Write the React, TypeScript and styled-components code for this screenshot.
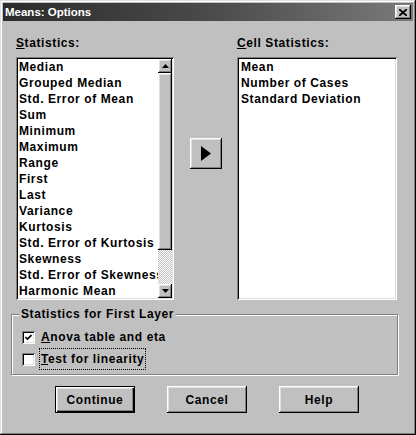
import React from 'react';
import styled, { createGlobalStyle } from 'styled-components';

const Global = createGlobalStyle`
  html, body { margin: 0; padding: 0; background: #c0c0c0; }
  body { font-family: "Liberation Sans", Arial, sans-serif; }
  * { box-sizing: border-box; }
`;

const bevelOut = `inset -1px -1px #000, inset 1px 1px #fff, inset -2px -2px #808080, inset 2px 2px #dfdfdf`;
const bevelIn = `inset 1px 1px #808080, inset -1px -1px #fff, inset 2px 2px #000, inset -2px -2px #dfdfdf`;

const Window = styled.div`
  width: 416px;
  height: 435px;
  background: #c0c0c0;
  padding: 3px;
  box-shadow: inset -1px -1px #000, inset 1px 1px #dfdfdf, inset -2px -2px #808080, inset 2px 2px #fff;
  display: flex;
  flex-direction: column;
  color: #000;
  font-size: 12px;
  font-weight: bold;
  letter-spacing: 0.6px;
`;

const TitleBar = styled.div`
  height: 18px;
  display: flex;
  align-items: center;
  justify-content: space-between;
  background: linear-gradient(90deg, #2c2c2c 0%, #4a4a4a 50%, #7a7a7a 100%);
  padding: 0 2px 0 2px;
  color: #fff;
  font-size: 11.5px;
  letter-spacing: 0;
`;

const TitleText = styled.span`
  line-height: 18px;
`;

const CloseButton = styled.div`
  width: 16px;
  height: 14px;
  background: #c0c0c0;
  box-shadow: ${bevelOut};
  display: flex;
  align-items: center;
  justify-content: center;
`;

const Body = styled.div`
  flex: 1;
  display: flex;
  flex-direction: column;
  padding: 14px 15px 0 8px;
`;

const TopGrid = styled.div`
  display: grid;
  grid-template-columns: 158px 1fr 160px;
  grid-template-rows: 16px 243px;
  row-gap: 6px;
  margin: 0 1px 0 5px;
`;

const Label = styled.div<{ $col: number }>`
  grid-column: ${(p) => p.$col};
  line-height: 16px;
  white-space: nowrap;
`;

const ListBox = styled.div<{ $pad: number }>`
  background: #fff;
  box-shadow: ${bevelIn};
  padding: 2px;
  display: flex;
  overflow: hidden;
  & > ul {
    padding-left: ${(p) => p.$pad}px;
  }
`;

const Items = styled.ul`
  flex: 1;
  margin: 0;
  list-style: none;
  line-height: 16px;
  overflow: hidden;
  white-space: nowrap;
  min-width: 0;
`;

const Item = styled.li`
  height: 16px;
`;

const ScrollBar = styled.div`
  width: 14px;
  display: flex;
  flex-direction: column;
`;

const ScrollArrow = styled.div`
  width: 14px;
  height: 14px;
  background: #c0c0c0;
  box-shadow: ${bevelOut};
  display: flex;
  align-items: center;
  justify-content: center;
`;

const Thumb = styled.div<{ $h: number }>`
  height: ${(p) => p.$h}px;
  background: #c0c0c0;
  box-shadow: ${bevelOut};
`;

const Track = styled.div`
  flex: 1;
  background: repeating-conic-gradient(#c0c0c0 0 25%, #fff 0 50%) 0 0 / 2px 2px;
`;

const MiddleColumn = styled.div`
  display: flex;
  justify-content: center;
  align-items: flex-start;
  padding-top: 81px;
`;

const MoveButton = styled.div`
  width: 32px;
  height: 31px;
  background: #c0c0c0;
  box-shadow: ${bevelOut};
  display: flex;
  align-items: center;
  justify-content: center;
`;

const GroupBox = styled.div`
  position: relative;
  margin-top: 14px;
  height: 61px;
  border: 1px solid #808080;
  box-shadow: inset 1px 1px #fff, 1px 1px #fff;
  padding: 12px 0 0 10px;
  display: flex;
  flex-direction: column;
  gap: 2px;
`;

const Legend = styled.span`
  position: absolute;
  top: -9px;
  left: 7px;
  padding: 0 2px;
  background: #c0c0c0;
  line-height: 16px;
`;

const CheckRow = styled.div`
  height: 20px;
  display: flex;
  align-items: center;
  gap: 5px;
`;

const CheckBox = styled.div`
  width: 13px;
  height: 13px;
  background: #fff;
  box-shadow: ${bevelIn};
  display: flex;
  align-items: center;
  justify-content: center;
`;

const CheckLabel = styled.span<{ $focus?: boolean }>`
  line-height: 16px;
  padding: 2px 1px;
  outline: ${(p) => (p.$focus ? '1px dotted #000' : 'none')};
  outline-offset: 0;
`;

const ButtonRow = styled.div`
  display: flex;
  justify-content: center;
  gap: 32px;
  margin-top: 11px;
  padding-left: 5px;
`;

const PushButton = styled.div<{ $default?: boolean }>`
  width: 80px;
  height: 27px;
  background: #c0c0c0;
  display: flex;
  align-items: center;
  justify-content: center;
  box-shadow: ${(p) =>
    p.$default
      ? 'inset 0 0 0 1px #000, inset 2px 2px #fff, inset -2px -2px #000, inset -3px -3px #808080, inset 3px 3px #dfdfdf'
      : bevelOut};
`;

const stats = [
  'Median',
  'Grouped Median',
  'Std. Error of Mean',
  'Sum',
  'Minimum',
  'Maximum',
  'Range',
  'First',
  'Last',
  'Variance',
  'Kurtosis',
  'Std. Error of Kurtosis',
  'Skewness',
  'Std. Error of Skewness',
  'Harmonic Mean',
];

const cellStats = ['Mean', 'Number of Cases', 'Standard Deviation'];

const Tri = ({ dir }: { dir: 'up' | 'down' }) => (
  <svg width="7" height="4" viewBox="0 0 7 4">
    <polygon points={dir === 'up' ? '3.5,0 7,4 0,4' : '0,0 7,0 3.5,4'} fill="#000" />
  </svg>
);

export default function App() {
  return (
    <>
      <Global />
      <Window>
        <TitleBar>
          <TitleText>Means: Options</TitleText>
          <CloseButton>
            <svg width="8" height="7" viewBox="0 0 8 7">
              <path d="M0,0 L8,7 M8,0 L0,7" stroke="#000" strokeWidth="1.8" />
            </svg>
          </CloseButton>
        </TitleBar>
        <Body>
          <TopGrid>
            <Label $col={1}>
              <u>S</u>tatistics:
            </Label>
            <Label $col={3}>
              <u>C</u>ell Statistics:
            </Label>
            <ListBox $pad={1}>
              <Items>
                {stats.map((s) => (
                  <Item key={s}>{s}</Item>
                ))}
              </Items>
              <ScrollBar>
                <ScrollArrow>
                  <Tri dir="up" />
                </ScrollArrow>
                <Thumb $h={177} />
                <Track />
                <ScrollArrow>
                  <Tri dir="down" />
                </ScrollArrow>
              </ScrollBar>
            </ListBox>
            <MiddleColumn>
              <MoveButton>
                <svg width="10" height="15" viewBox="0 0 10 15">
                  <polygon points="0,0 10,7.5 0,15" fill="#000" />
                </svg>
              </MoveButton>
            </MiddleColumn>
            <ListBox $pad={2}>
              <Items>
                {cellStats.map((s) => (
                  <Item key={s}>{s}</Item>
                ))}
              </Items>
            </ListBox>
          </TopGrid>
          <GroupBox>
            <Legend>Statistics for First Layer</Legend>
            <CheckRow>
              <CheckBox>
                <svg width="7" height="7" viewBox="0 0 7 7">
                  <path d="M0.5,3 L2.5,5 L6.5,1" stroke="#000" strokeWidth="1.6" fill="none" />
                </svg>
              </CheckBox>
              <CheckLabel>
                <u>A</u>nova table and eta
              </CheckLabel>
            </CheckRow>
            <CheckRow>
              <CheckBox />
              <CheckLabel $focus>
                <u>T</u>est for linearity
              </CheckLabel>
            </CheckRow>
          </GroupBox>
          <ButtonRow>
            <PushButton $default>Continue</PushButton>
            <PushButton>Cancel</PushButton>
            <PushButton>Help</PushButton>
          </ButtonRow>
        </Body>
      </Window>
    </>
  );
}
